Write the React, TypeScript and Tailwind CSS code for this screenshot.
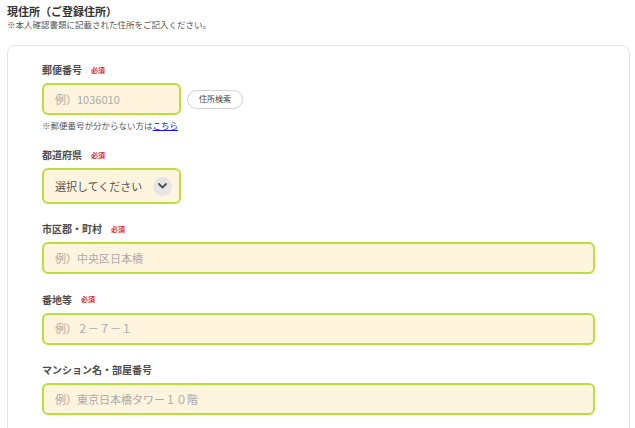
import React from "react";

const font = { fontFamily: '"Noto Sans CJK JP", "Noto Sans", sans-serif' };

function Req() {
  return (
    <span className="ml-[9px] text-[7px] font-bold leading-none text-[#e8262d]">必須</span>
  );
}

function Label({ text, req = true }: { text: string; req?: boolean }) {
  return (
    <div className="flex items-center h-[14px] mb-[6px]">
      <span className="text-[10px] font-bold leading-[14px] text-[#4d4d4d]">{text}</span>
      {req && <Req />}
    </div>
  );
}

function Field({ placeholder, className = "" }: { placeholder: string; className?: string }) {
  return (
    <div
      className={
        "h-[32px] rounded-[6px] border-2 border-[#b7e13a] bg-[#fff4de] flex items-center pl-[11px] " +
        className
      }
    >
      <span className="text-[11px] leading-none text-[#aaaaaa]">{placeholder}</span>
    </div>
  );
}

export default function App() {
  return (
    <div className="w-[635px] h-[428px] overflow-hidden bg-white" style={font}>
      <div className="pt-[4px] pl-[7px]">
        <h1 className="text-[11px] font-bold leading-[14px] text-[#333]">現住所（ご登録住所）</h1>
        <p className="mt-[1px] text-[8.5px] leading-[11px] text-[#555]">
          ※本人確認書類に記載された住所をご記入ください。
        </p>
      </div>
      <div className="mt-[15px] ml-[7px] mr-[5px] h-[420px] rounded-[8px] border border-[#e3e3e3] px-[34px] pt-[17px]">
        <Label text="郵便番号" />
        <div className="flex items-center">
          <Field placeholder="例）1036010" className="w-[139px]" />
          <div className="ml-[6px] h-[19px] w-[56px] rounded-full border border-[#d2d2d2] bg-white flex items-center justify-center">
            <span className="text-[8px] leading-none text-[#444]">住所検索</span>
          </div>
        </div>
        <p className="mt-[4px] text-[8.5px] leading-[12px] text-[#555]">
          ※郵便番号が分からない方は<span className="text-[#1a0dff] underline">こちら</span>
        </p>

        <div className="mt-[17px]">
          <Label text="都道府県" />
          <div className="h-[36px] w-[139px] rounded-[6px] border-2 border-[#b7e13a] bg-[#fff4de] flex items-center justify-between pl-[11px] pr-[7px]">
            <span className="text-[11px] leading-none text-[#555]">選択してください</span>
            <span className="h-[19px] w-[19px] rounded-full bg-[#e5e5e5] flex items-center justify-center">
              <svg width="9" height="6" viewBox="0 0 9 6" fill="none">
                <path d="M1 1l3.5 3.5L8 1" stroke="#505050" strokeWidth="1.8" strokeLinecap="round" strokeLinejoin="round" />
              </svg>
            </span>
          </div>
        </div>

        <div className="mt-[18px]">
          <Label text="市区郡・町村" />
          <Field placeholder="例）中央区日本橋" />
        </div>

        <div className="mt-[18.5px]">
          <Label text="番地等" />
          <Field placeholder="例）２－７－１" className="h-[32.5px]" />
        </div>

        <div className="mt-[18.5px]">
          <Label text="マンション名・部屋番号" req={false} />
          <Field placeholder="例）東京日本橋タワー１０階" />
        </div>
      </div>
    </div>
  );
}
